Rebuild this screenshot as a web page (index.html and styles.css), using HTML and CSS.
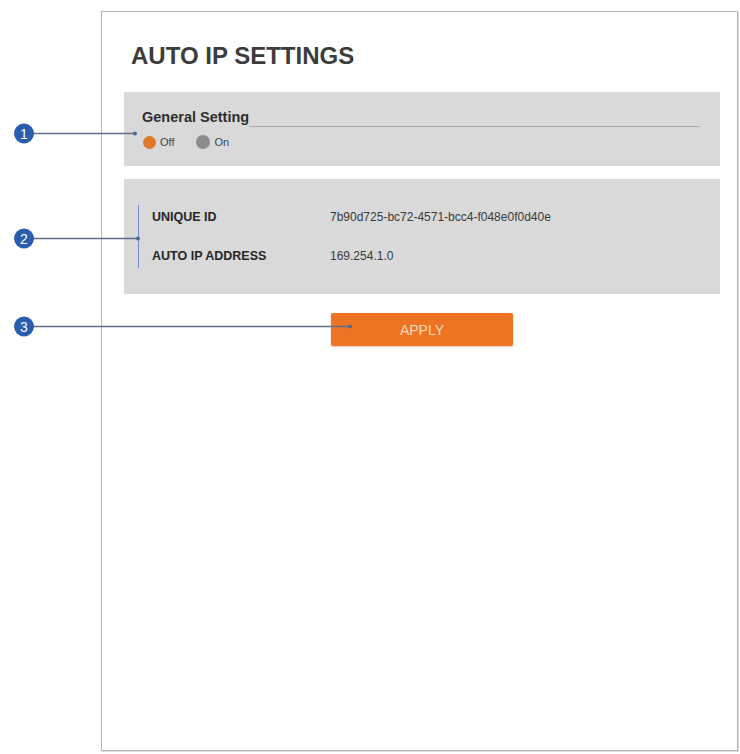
FILE: index.html
```html
<!DOCTYPE html>
<html lang="en">
<head>
<meta charset="utf-8">
<title>Auto IP Settings</title>
<link rel="stylesheet" href="styles.css">
</head>
<body>
<div class="page">
  <div class="frame">
    <h1 class="title">AUTO IP SETTINGS</h1>

    <section class="panel panel-general">
      <div class="panel-head">
        <span class="panel-head-text">General Setting</span>
        <span class="panel-head-rule"></span>
      </div>
      <div class="radios">
        <span class="radio radio-on"></span><span class="radio-label">Off</span>
        <span class="radio radio-off"></span><span class="radio-label">On</span>
      </div>
    </section>

    <section class="panel panel-info">
      <div class="fields">
        <div class="field">
          <span class="field-label">UNIQUE ID</span>
          <span class="field-value">7b90d725-bc72-4571-bcc4-f048e0f0d40e</span>
        </div>
        <div class="field">
          <span class="field-label">AUTO IP ADDRESS</span>
          <span class="field-value">169.254.1.0</span>
        </div>
      </div>
    </section>

    <div class="actions">
      <button class="apply" type="button">APPLY</button>
    </div>
  </div>

  <svg class="callouts" width="740" height="754" viewBox="0 0 740 754">
    <g class="lead">
      <line x1="26" y1="133.5" x2="135" y2="133.5"/>
      <line x1="26" y1="238.5" x2="138" y2="238.5"/>
      <line x1="26" y1="326.5" x2="350" y2="326.5"/>
    </g>
    <g class="tip">
      <circle cx="135" cy="133.5" r="2"/>
      <circle cx="138" cy="238.5" r="2"/>
      <circle cx="350" cy="326.5" r="2"/>
    </g>
    <g class="badge">
      <circle cx="24" cy="133.5" r="10"/>
      <circle cx="24" cy="238.5" r="10"/>
      <circle cx="24" cy="326.5" r="10"/>
    </g>
    <g class="badge-num">
      <text x="24" y="138.5">1</text>
      <text x="24" y="243.5">2</text>
      <text x="24" y="331.5">3</text>
    </g>
  </svg>
</div>
</body>
</html>
```

FILE: styles.css
```css
html, body {
  margin: 0;
  padding: 0;
  background: #ffffff;
}

body {
  font-family: "Liberation Sans", Arial, sans-serif;
  color: #333333;
}

.page {
  position: relative;
  width: 740px;
  height: 754px;
  overflow: hidden;
}

.frame {
  box-sizing: border-box;
  margin: 11px 0 0 101px;
  width: 637px;
  height: 740px;
  border: 1px solid #b4b4b4;
  box-shadow: 1px 1px 0 #dcdcdc;
  padding: 30px 17px 0 22px;
  background: #ffffff;
}

.title {
  margin: 0 0 22px 7px;
  font-size: 24px;
  line-height: 28px;
  font-weight: bold;
  color: #3c3c3c;
}

.panel {
  background: #d9d9d9;
}

.panel-general {
  padding: 16px 20px 16px 18px;
}

.panel-head {
  display: flex;
  align-items: flex-end;
  height: 18px;
}

.panel-head-text {
  font-size: 14.5px;
  line-height: 18px;
  font-weight: bold;
  color: #2e2e2e;
  white-space: nowrap;
}

.panel-head-rule {
  flex: 1;
  height: 0;
  border-bottom: 1px solid #a9a9a9;
  margin-bottom: -1px;
}

.radios {
  display: flex;
  align-items: center;
  height: 16px;
  margin-top: 8px;
}

.radio {
  width: 13px;
  height: 13px;
  border-radius: 50%;
  margin-left: 1px;
}

.radio-on {
  background: #e0782c;
}

.radio-off {
  background: #8c8c8c;
  width: 14px;
  height: 14px;
}

.radio-label {
  font-size: 11px;
  color: #444444;
  margin-left: 4px;
  margin-right: 21px;
}

.panel-info {
  margin-top: 13px;
  padding: 26px 20px 26px 14px;
}

.fields {
  display: flex;
  flex-direction: column;
  gap: 15px;
  border-left: 1px solid #6f8dc8;
  padding-left: 13px;
}

.field {
  display: flex;
  align-items: center;
  height: 24px;
}

.field-label {
  width: 178px;
  font-size: 12.5px;
  font-weight: bold;
  color: #262626;
}

.field-value {
  font-size: 12px;
  color: #3a3a3a;
}

.actions {
  display: flex;
  justify-content: center;
  width: 596px;
  margin-top: 19px;
}

.apply {
  width: 182px;
  height: 33px;
  border: none;
  border-radius: 2px;
  background: #ee7424;
  color: #fcd9bd;
  font-family: "Liberation Sans", Arial, sans-serif;
  font-size: 14px;
  padding: 0;
  box-shadow: 0 1px 2px rgba(200, 90, 20, 0.35);
}

.callouts {
  position: absolute;
  left: 0;
  top: 0;
  pointer-events: none;
}

.lead line {
  stroke: #5e708c;
  stroke-width: 1.3;
}

.tip circle {
  fill: #4d6791;
}

.badge circle {
  fill: #2a5caf;
}

.badge-num text {
  fill: #ffffff;
  font-family: "Liberation Sans", Arial, sans-serif;
  font-size: 14px;
  text-anchor: middle;
}
```
